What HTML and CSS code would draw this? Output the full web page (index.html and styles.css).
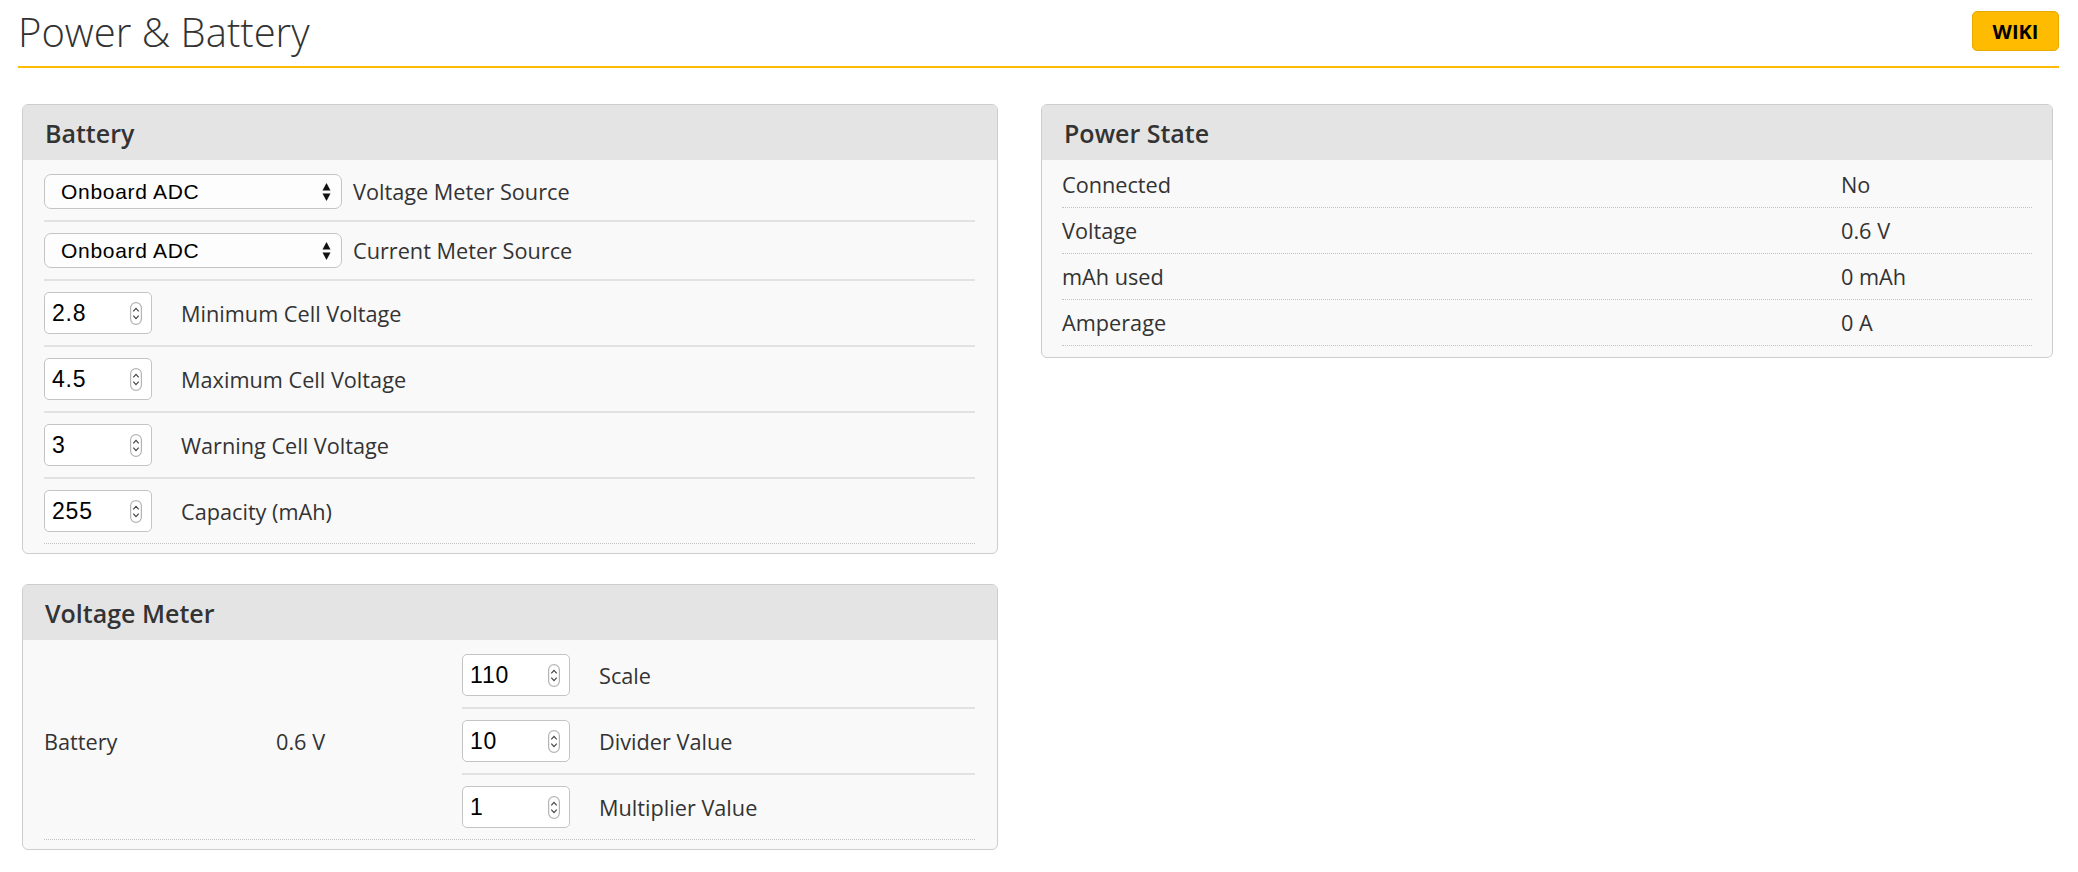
FILE: index.html
```html
<!DOCTYPE html>
<html lang="en">
<head>
    <meta charset="UTF-8">
    <title>Power &amp; Battery</title>
    <link rel="stylesheet" href="styles.css">
</head>
<body>
    <div class="tab">
        <!-- 标题栏 -->
        <div class="tab-title">
            <span class="tab-title-text">Power &amp; Battery</span>
            <a class="wiki-button">WIKI</a>
        </div>

        <div class="columns">
            <div class="column">
                <!-- Battery -->
                <div class="gui-box">
                    <div class="gui-box-title">Battery</div>
                    <div class="gui-box-body">
                        <div class="field">
                            <span class="select-wrap">
                                <select><option>Onboard ADC</option></select>
                                <svg class="select-arrows" width="11" height="20" viewBox="0 0 11 20"><polygon points="5.5,1 9.5,8.5 1.5,8.5" fill="#111"/><polygon points="1.5,11.5 9.5,11.5 5.5,19" fill="#111"/></svg>
                            </span>
                            <span class="select-label">Voltage Meter Source</span>
                        </div>
                        <div class="field">
                            <span class="select-wrap">
                                <select><option>Onboard ADC</option></select>
                                <svg class="select-arrows" width="11" height="20" viewBox="0 0 11 20"><polygon points="5.5,1 9.5,8.5 1.5,8.5" fill="#111"/><polygon points="1.5,11.5 9.5,11.5 5.5,19" fill="#111"/></svg>
                            </span>
                            <span class="select-label">Current Meter Source</span>
                        </div>
                        <div class="field">
                            <span class="number-wrap">
                                <input type="text" value="2.8">
                                <svg class="spinner" width="12" height="23" viewBox="0 0 12 23"><rect x="0.6" y="0.6" width="10.8" height="21.8" rx="5.4" fill="#fff" stroke="#b4b4b4" stroke-width="1.2"/><path d="M3.3 9.3 L6 6.3 L8.7 9.3 M3.3 13.7 L6 16.7 L8.7 13.7" fill="none" stroke="#444" stroke-width="1.2"/></svg>
                            </span>
                            <span class="number-label">Minimum Cell Voltage</span>
                        </div>
                        <div class="field">
                            <span class="number-wrap">
                                <input type="text" value="4.5">
                                <svg class="spinner" width="12" height="23" viewBox="0 0 12 23"><rect x="0.6" y="0.6" width="10.8" height="21.8" rx="5.4" fill="#fff" stroke="#b4b4b4" stroke-width="1.2"/><path d="M3.3 9.3 L6 6.3 L8.7 9.3 M3.3 13.7 L6 16.7 L8.7 13.7" fill="none" stroke="#444" stroke-width="1.2"/></svg>
                            </span>
                            <span class="number-label">Maximum Cell Voltage</span>
                        </div>
                        <div class="field">
                            <span class="number-wrap">
                                <input type="text" value="3">
                                <svg class="spinner" width="12" height="23" viewBox="0 0 12 23"><rect x="0.6" y="0.6" width="10.8" height="21.8" rx="5.4" fill="#fff" stroke="#b4b4b4" stroke-width="1.2"/><path d="M3.3 9.3 L6 6.3 L8.7 9.3 M3.3 13.7 L6 16.7 L8.7 13.7" fill="none" stroke="#444" stroke-width="1.2"/></svg>
                            </span>
                            <span class="number-label">Warning Cell Voltage</span>
                        </div>
                        <div class="field last">
                            <span class="number-wrap">
                                <input type="text" value="255">
                                <svg class="spinner" width="12" height="23" viewBox="0 0 12 23"><rect x="0.6" y="0.6" width="10.8" height="21.8" rx="5.4" fill="#fff" stroke="#b4b4b4" stroke-width="1.2"/><path d="M3.3 9.3 L6 6.3 L8.7 9.3 M3.3 13.7 L6 16.7 L8.7 13.7" fill="none" stroke="#444" stroke-width="1.2"/></svg>
                            </span>
                            <span class="number-label">Capacity (mAh)</span>
                        </div>
                    </div>
                </div>

                <!-- Voltage Meter -->
                <div class="gui-box">
                    <div class="gui-box-title">Voltage Meter</div>
                    <div class="gui-box-body">
                        <div class="meter-row">
                            <div class="meter-name">Battery</div>
                            <div class="meter-value">0.6 V</div>
                            <div class="meter-fields">
                                <div class="field">
                                    <span class="number-wrap">
                                        <input type="text" value="110">
                                        <svg class="spinner" width="12" height="23" viewBox="0 0 12 23"><rect x="0.6" y="0.6" width="10.8" height="21.8" rx="5.4" fill="#fff" stroke="#b4b4b4" stroke-width="1.2"/><path d="M3.3 9.3 L6 6.3 L8.7 9.3 M3.3 13.7 L6 16.7 L8.7 13.7" fill="none" stroke="#444" stroke-width="1.2"/></svg>
                                    </span>
                                    <span class="number-label">Scale</span>
                                </div>
                                <div class="field">
                                    <span class="number-wrap">
                                        <input type="text" value="10">
                                        <svg class="spinner" width="12" height="23" viewBox="0 0 12 23"><rect x="0.6" y="0.6" width="10.8" height="21.8" rx="5.4" fill="#fff" stroke="#b4b4b4" stroke-width="1.2"/><path d="M3.3 9.3 L6 6.3 L8.7 9.3 M3.3 13.7 L6 16.7 L8.7 13.7" fill="none" stroke="#444" stroke-width="1.2"/></svg>
                                    </span>
                                    <span class="number-label">Divider Value</span>
                                </div>
                                <div class="field plain">
                                    <span class="number-wrap">
                                        <input type="text" value="1">
                                        <svg class="spinner" width="12" height="23" viewBox="0 0 12 23"><rect x="0.6" y="0.6" width="10.8" height="21.8" rx="5.4" fill="#fff" stroke="#b4b4b4" stroke-width="1.2"/><path d="M3.3 9.3 L6 6.3 L8.7 9.3 M3.3 13.7 L6 16.7 L8.7 13.7" fill="none" stroke="#444" stroke-width="1.2"/></svg>
                                    </span>
                                    <span class="number-label">Multiplier Value</span>
                                </div>
                            </div>
                        </div>
                    </div>
                </div>
            </div>

            <div class="column">
                <!-- Power State -->
                <div class="gui-box">
                    <div class="gui-box-title">Power State</div>
                    <div class="gui-box-body state-body">
                        <div class="state-row"><span>Connected</span><span>No</span></div>
                        <div class="state-row"><span>Voltage</span><span>0.6 V</span></div>
                        <div class="state-row"><span>mAh used</span><span>0 mAh</span></div>
                        <div class="state-row"><span>Amperage</span><span>0 A</span></div>
                    </div>
                </div>
            </div>
        </div>
    </div>
</body>
</html>
```

FILE: styles.css
```css
body {
    margin: 0;
    background-color: #fff;
    font-family: "Open Sans", "Liberation Sans", sans-serif;
    font-size: 21.7px;
    color: #333;
}
.tab {
    padding: 0 19px 0 18px;
}
/* 标题栏 */
.tab-title {
    height: 66px;
    border-bottom: 2px solid #ffbb00;
    display: flex;
    justify-content: space-between;
    align-items: flex-start;
}
.tab-title-text {
    font-size: 40px;
    font-weight: 300;
    padding-top: 4px;
    color: #333;
}
.wiki-button {
    margin-top: 11px;
    width: 85px;
    height: 38px;
    display: flex;
    align-items: center;
    justify-content: center;
    background-color: #ffbb00;
    border: 1px solid #e8a900;
    border-radius: 5px;
    font-size: 20px;
    font-weight: 700;
    color: #000;
    cursor: pointer;
}
.columns {
    display: grid;
    grid-template-columns: 976px 1fr;
    gap: 43px;
    padding: 36px 6px 0 4px;
    align-items: start;
}
.column {
    display: flex;
    flex-direction: column;
    gap: 30px;
}
/* 面板 */
.gui-box {
    border: 1px solid #cdcdcd;
    border-radius: 6px;
    background-color: #f9f9f9;
    overflow: hidden;
}
.gui-box-title {
    height: 55px;
    padding: 0 22px;
    display: flex;
    align-items: center;
    background-color: #e4e4e4;
    font-size: 25px;
    font-weight: 600;
    color: #333;
}
.gui-box-body {
    padding: 3px 22px 9px 21px;
}
.field {
    display: flex;
    align-items: center;
    padding: 11px 0;
    border-bottom: 2px solid #e2e2e2;
}
.field.last {
    border-bottom: 1px dotted #c2c2c2;
}
.field.plain {
    border-bottom: none;
}
/* 下拉框 */
.select-wrap,
.number-wrap {
    position: relative;
    display: inline-block;
}
select {
    -webkit-appearance: none;
    appearance: none;
    width: 298px;
    height: 35px;
    padding: 0 0 0 16px;
    border: 1px solid #c4c4c4;
    border-radius: 7px;
    background-color: #fdfdfd;
    font-family: "Liberation Sans", Arial, sans-serif;
    font-size: 21px;
    letter-spacing: 0.7px;
    color: #000;
}
.select-arrows {
    position: absolute;
    right: 10px;
    top: 8px;
}
.select-label {
    margin-left: 11px;
}
/* 数字输入框 */
.number-wrap input {
    box-sizing: border-box;
    width: 108px;
    height: 42px;
    padding: 0 0 0 7px;
    border: 1px solid #c4c4c4;
    border-radius: 5px;
    background-color: #fff;
    font-family: "Liberation Sans", Arial, sans-serif;
    font-size: 23px;
    letter-spacing: 0.8px;
    color: #000;
}
.spinner {
    position: absolute;
    right: 10px;
    top: 10px;
}
.number-label {
    margin-left: 29px;
}
/* Voltage Meter */
.meter-row {
    display: grid;
    grid-template-columns: 232px 186px 1fr;
    align-items: center;
    border-bottom: 1px dotted #c2c2c2;
}
/* Power State */
.state-body {
    padding: 2px 20px 11px 20px;
}
.state-row {
    display: grid;
    grid-template-columns: 779px 1fr;
    align-items: center;
    height: 45px;
    border-bottom: 1px dotted #c2c2c2;
}
```
